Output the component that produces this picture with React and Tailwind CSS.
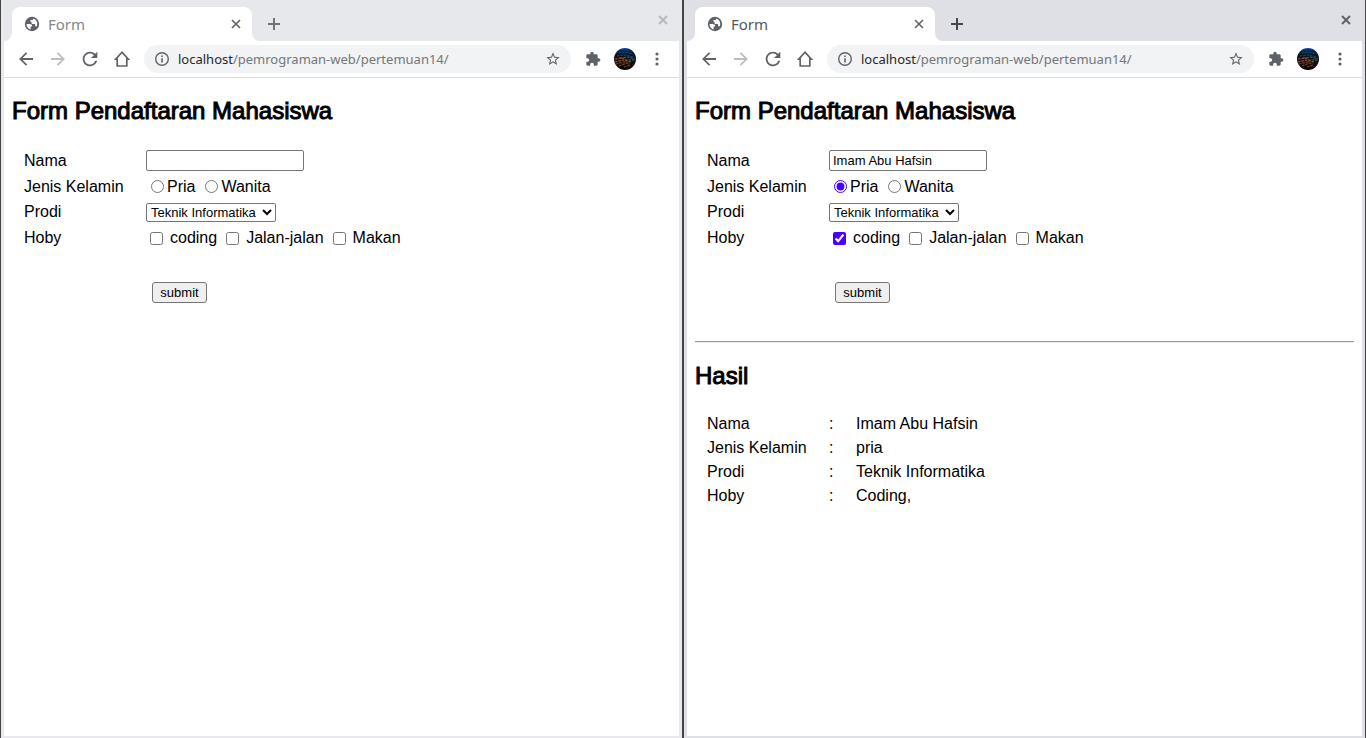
import React, { useId } from "react";

const HOBBIES = ["coding", "Jalan-jalan", "Makan"];

function Svg({ size = "size-5", className = "", children }) {
  return (
    <svg viewBox="0 0 24 24" fill="currentColor" aria-hidden="true" className={`block shrink-0 ${size} ${className}`}>
      {children}
    </svg>
  );
}

function GlobeIcon() {
  return (
    <svg viewBox="0 0 16 16" aria-hidden="true" className="block size-4 shrink-0">
      <circle cx="8" cy="8" r="7.2" fill="#5f6368" />
      <path
        d="M2.5 8h3.100c1.600 0 2.500.800 2.500 2.100v.500H6.600v2.900C4.200 12.800 2.500 10.600 2.500 8zM9.300 2.600c0 1-.500 1.500-1.400 1.500H6.500v1.600h1v1c0 .9.500 1.200 1.300 1.200h1.300c.8 0 1.100.4 1.100 1.100v1.200h1.700c1.200-3-.4-6.700-3.600-7.600z"
        fill="#fff"
      />
    </svg>
  );
}

function Cross({ className }) {
  return (
    <svg viewBox="0 0 10 10" aria-hidden="true" fill="none" stroke="currentColor" className={`block size-2.5 ${className}`}>
      <path d="M1 1l8 8M9 1L1 9" />
    </svg>
  );
}

function TabStrip({ active }) {
  const strip = active ? "bg-[#dee0e5]" : "bg-[#e7e8ec]";
  return (
    <div className={`flex h-[41px] justify-between ${strip}`}>
      <div className="flex pt-[7px]">
        <svg viewBox="0 0 8 8" aria-hidden="true" className="size-2 self-end">
          <path d="M8 0v8H0a8 8 0 0 0 8-8z" fill="#fff" />
        </svg>
        <div className="flex w-60 items-center rounded-t-lg bg-white pl-3 pr-[9px]">
          <GlobeIcon />
          <span className={`ml-2 flex-1 font-['Noto_Sans',sans-serif] text-[15px] ${active ? "text-[#55585c]" : "text-[#85878a]"}`}>
            Form
          </span>
          <button type="button" aria-label="Close tab" className="grid size-3.5 place-items-center text-[#5f6368]">
            <Cross className="stroke-[1.6px]" />
          </button>
        </div>
        <svg viewBox="0 0 8 8" aria-hidden="true" className="size-2 self-end">
          <path d="M0 0v8h8a8 8 0 0 1-8-8z" fill="#fff" />
        </svg>
        <button type="button" aria-label="New tab" className={`grid w-7 place-items-center ${active ? "text-[#45484c]" : "text-[#6f7276]"}`}>
          <svg viewBox="0 0 12 12" aria-hidden="true" className="size-3">
            <path d="M5 0h2v5h5v2H7v5H5V7H0V5h5z" fill="currentColor" />
          </svg>
        </button>
      </div>
      <button
        type="button"
        aria-label="Close window"
        className={`grid h-10 w-8 place-items-center ${active ? "text-[#606469]" : "text-[#b7b9bc]"}`}
      >
        <Cross className="stroke-[2px]" />
      </button>
    </div>
  );
}

function ToolButton({ label, className = "text-[#5f6368]", children }) {
  return (
    <button type="button" aria-label={label} className={`grid size-7 shrink-0 place-items-center ${className}`}>
      {children}
    </button>
  );
}

const ARROW = "M20.400 10.900H7.830l5.590-5.490L12 4l-8.300 8 8.300 8 1.410-1.410L7.830 13.100H20.400z";

function Avatar() {
  return (
    <svg viewBox="0 0 22 22" aria-hidden="true" className="block size-[22px]">
      <clipPath id="avatar-clip">
        <circle cx="11" cy="11" r="11" />
      </clipPath>
      <linearGradient id="avatar-sky" x1="0" y1="0" x2="0" y2="1">
        <stop offset="0" stopColor="#0b4aa8" />
        <stop offset="0.150" stopColor="#0a2450" />
        <stop offset="0.350" stopColor="#0c1116" />
        <stop offset="0.600" stopColor="#1c100d" />
        <stop offset="1" stopColor="#050304" />
      </linearGradient>
      <g clipPath="url(#avatar-clip)">
        <rect width="22" height="22" fill="url(#avatar-sky)" />
        <g fill="none" strokeDasharray="2.500 1">
          <path d="M5 5l6-1 8 2M3 8l8-1 9 2" stroke="#14506f" />
          <path d="M6 10l8-1 7 2M11 12l9 0" stroke="#2f7480" />
          <path d="M1 11l7-1 3 1M1 14l8-2 8 2" stroke="#8f4e3a" strokeWidth="1.200" />
          <path d="M2 16l8-2 6 2M5 18l8-3M10 19l6-2" stroke="#7d3a24" strokeWidth="1.200" />
        </g>
      </g>
    </svg>
  );
}

function Toolbar() {
  return (
    <div className="flex h-[37px] items-center border-b border-[#dadce0] bg-white px-2">
      <div className="flex gap-1">
        <ToolButton label="Back">
          <Svg><path d={ARROW} /></Svg>
        </ToolButton>
        <ToolButton label="Forward" className="text-[#babcbe]">
          <Svg className="-scale-x-100"><path d={ARROW} /></Svg>
        </ToolButton>
        <ToolButton label="Reload">
          <Svg size="size-[22px]">
            <path d="M17.650 6.350C16.200 4.900 14.210 4 12 4c-4.420 0-7.990 3.580-7.990 8s3.570 8 7.990 8c3.730 0 6.840-2.550 7.730-6h-2.080c-.820 2.330-3.040 4-5.650 4-3.310 0-6-2.690-6-6s2.690-6 6-6c1.660 0 3.140.690 4.220 1.780L13 11h7V4l-2.350 2.350z" />
          </Svg>
        </ToolButton>
        <ToolButton label="Home">
          <svg viewBox="0 0 16 16" aria-hidden="true" className="size-4">
            <path d="M8 1.200L1.700 8.100h1.500v6.900h9.600V8.100h1.500z" fill="none" stroke="currentColor" strokeWidth="1.700" />
          </svg>
        </ToolButton>
      </div>
      <div className="mx-2 flex h-7 min-w-0 flex-1 items-center rounded-full bg-[#f1f3f4] px-2.5 text-[#5f6368]">
        <svg viewBox="0 0 16 16" aria-hidden="true" className="size-4 shrink-0">
          <circle cx="8" cy="8" r="6.300" fill="none" stroke="currentColor" strokeWidth="1.400" />
          <path d="M7.200 7.200h1.600v4.200H7.200zM7.200 4.500h1.600v1.600H7.200z" fill="currentColor" />
        </svg>
        <span className="ml-2 min-w-0 flex-1 truncate font-['Noto_Sans',sans-serif] text-[13px] leading-[22px] text-[#73767a]">
          <span className="text-[#27282b]">localhost</span>/pemrograman-web/pertemuan14/
        </span>
        <button type="button" aria-label="Bookmark this page">
          <Svg size="size-4">
            <path d="M22 9.240l-7.190-.620L12 2 9.190 8.630 2 9.240l5.460 4.730L5.820 21 12 17.270 18.180 21l-1.630-7.030L22 9.240zM12 15.400l-3.760 2.270 1-4.280-3.320-2.880 4.380-.380L12 6.100l1.710 4.040 4.380.380-3.320 2.880 1 4.280L12 15.400z" />
          </Svg>
        </button>
      </div>
      <div className="flex gap-1">
        <ToolButton label="Extensions">
          <Svg size="size-4">
            <path d="M20.500 11H19V7c0-1.100-.9-2-2-2h-4V3.500C13 2.120 11.880 1 10.500 1S8 2.120 8 3.500V5H4c-1.100 0-1.990.9-1.990 2v3.800H3.500c1.490 0 2.700 1.210 2.700 2.700s-1.210 2.700-2.700 2.700H2V20c0 1.100.9 2 2 2h3.800v-1.500c0-1.490 1.210-2.700 2.700-2.700 1.490 0 2.700 1.210 2.700 2.700V22H17c1.100 0 2-.9 2-2v-4h1.500c1.380 0 2.500-1.120 2.500-2.500S21.880 11 20.500 11z" />
          </Svg>
        </ToolButton>
        <ToolButton label="Profile">
          <Avatar />
        </ToolButton>
        <ToolButton label="Menu">
          <svg viewBox="0 0 4 14" aria-hidden="true" fill="currentColor" className="h-3.5 w-1">
            <circle cx="2" cy="2" r="1.600" />
            <circle cx="2" cy="7" r="1.600" />
            <circle cx="2" cy="12" r="1.600" />
          </svg>
        </ToolButton>
      </div>
    </div>
  );
}

function Heading({ children }) {
  return (
    <h2 className="text-2xl leading-[27px] [-webkit-text-stroke:1px_black]">{children}</h2>
  );
}

function RegistrationForm({ name = "", gender, hobbies = [] }) {
  const id = useId();
  return (
    <form className="mt-[23px] ml-3" onSubmit={(event) => event.preventDefault()}>
      <div className="flex h-[27px] items-center">
        <label htmlFor={`${id}-name`} className="w-[122px]">Nama</label>
        <input
          id={`${id}-name`}
          type="text"
          defaultValue={name}
          className="h-[21px] w-[158px] rounded-xs border border-[#767676] bg-white px-[3px] text-[13px]"
        />
      </div>
      <div role="radiogroup" aria-labelledby={`${id}-gender`} className="flex h-[25px] items-center">
        <span id={`${id}-gender`} className="w-[122px]">Jenis Kelamin</span>
        <div className="flex gap-2.5 pl-[5px]">
          {["Pria", "Wanita"].map((option) => (
            <label key={option} className="flex items-center gap-[3px]">
              <input
                type="radio"
                name={`${id}-gender`}
                defaultChecked={gender === option}
                className="size-[13px] accent-[#4a00ff]"
              />
              {option}
            </label>
          ))}
        </div>
      </div>
      <div className="flex h-[26px] items-center">
        <label htmlFor={`${id}-prodi`} className="w-[122px]">Prodi</label>
        <select id={`${id}-prodi`} className="h-[19px] w-[130px] rounded-xs border border-[#767676] bg-white text-[13px]">
          <option>Teknik Informatika</option>
        </select>
      </div>
      <div role="group" aria-labelledby={`${id}-hoby`} className="flex h-[26px] items-center">
        <span id={`${id}-hoby`} className="w-[122px]">Hoby</span>
        <div className="flex gap-[9px] pl-1">
          {HOBBIES.map((hobby) => (
            <label key={hobby} className="flex items-center gap-[7px]">
              <input
                type="checkbox"
                defaultChecked={hobbies.includes(hobby)}
                className="size-[13px] accent-[#4a00ff]"
              />
              {hobby}
            </label>
          ))}
        </div>
      </div>
      <button
        type="submit"
        className="mt-[31px] ml-32 block h-[21px] w-[55px] rounded-[3px] border border-[#767676] bg-[#efefef] text-[13px] leading-[19px]"
      >
        submit
      </button>
    </form>
  );
}

function Results({ rows }) {
  return (
    <section>
      <hr className="mt-[38px] mb-[19px] h-0.5 border-t border-b border-t-[#9a9a9a] border-b-[#eeeeee]" />
      <Heading>Hasil</Heading>
      <table className="mt-[23px] ml-3">
        <tbody>
          {rows.map(([label, value]) => (
            <tr key={label} className="h-6">
              <th scope="row" className="w-[122px] p-0 text-left font-normal">{label}</th>
              <td className="w-[27px] p-0">:</td>
              <td className="p-0">{value}</td>
            </tr>
          ))}
        </tbody>
      </table>
    </section>
  );
}

function BrowserWindow({ active = false, children }) {
  const frame = active ? "bg-[#dfe0e6]" : "bg-[#e9e8ed]";
  return (
    <div className={`flex min-w-0 flex-1 flex-col border-x border-[#454545] px-[3px] pb-0.5 ${frame}`}>
      <TabStrip active={active} />
      <Toolbar />
      <main className="flex-1 bg-white px-2 pt-[19px] font-['Liberation_Sans',Arial,sans-serif] text-base text-black">
        {children}
      </main>
    </div>
  );
}

export default function App() {
  return (
    <div className="flex min-h-screen">
      <BrowserWindow>
        <Heading>Form Pendaftaran Mahasiswa</Heading>
        <RegistrationForm />
      </BrowserWindow>
      <BrowserWindow active>
        <Heading>Form Pendaftaran Mahasiswa</Heading>
        <RegistrationForm name="Imam Abu Hafsin" gender="Pria" hobbies={["coding"]} />
        <Results
          rows={[
            ["Nama", "Imam Abu Hafsin"],
            ["Jenis Kelamin", "pria"],
            ["Prodi", "Teknik Informatika"],
            ["Hoby", "Coding,"],
          ]}
        />
      </BrowserWindow>
    </div>
  );
}
